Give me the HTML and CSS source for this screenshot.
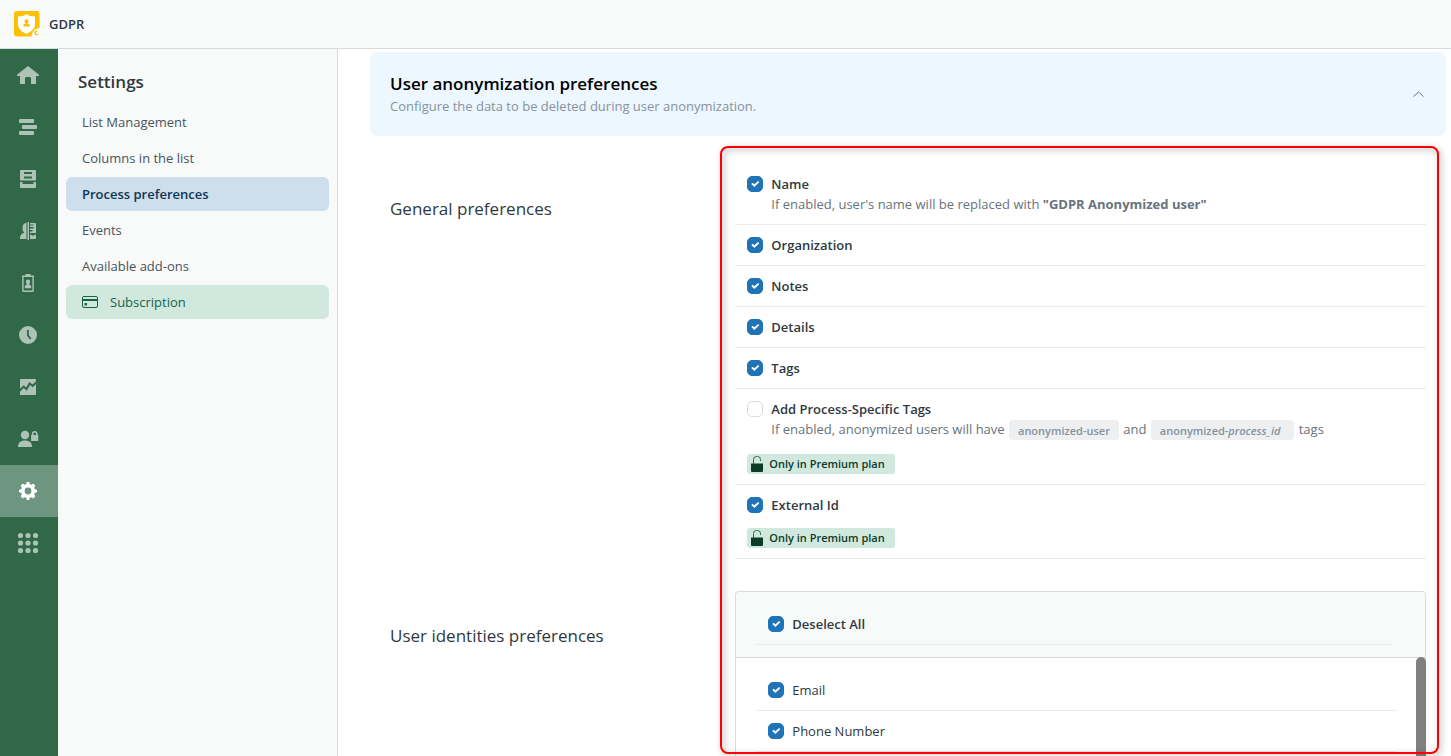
FILE: index.html
```html
<!DOCTYPE html>
<html lang="en">
<head>
<meta charset="utf-8">
<title>GDPR</title>
<link rel="stylesheet" href="styles.css">
</head>
<body>
<header class="topbar">
  <svg class="logo" viewBox="0 0 26 26" aria-hidden="true">
    <path fill="#fbc100" d="M3 0h20a2.500 2.500 0 0 1 2.500 2.500V17c-4 0-8 4-8 8.500H3A3 3 0 0 1 0 22.500v-19.500A3 3 0 0 1 3 0z"/>
    <path fill="#fff" d="M12.500 3c2.500 1.800 5 2.400 8.500 2.600v8c0 4-3.500 7-8.500 9.400C7.500 20.600 4 17.600 4 13.600v-8C7.500 5.400 10 4.800 12.500 3z"/>
    <circle cx="12.500" cy="10.300" r="2" fill="#fbc100"/>
    <path fill="#fbc100" d="M11.700 11h1.600v1.600l2.400.9v1.900H9.400v-1.900l2.300-.9z"/>
    <path fill="none" stroke="#fbc100" stroke-width="1.300" d="M23 20.500a1.600 1.600 0 1 0 .8 2.500"/>
  </svg>
  <span>GDPR</span>
</header>
<div class="shell">
  <nav class="rail" aria-label="Main">
    <a href="#" aria-label="Home"><svg viewBox="0 0 24 24"><path d="M12 3 1 11.700V13h3v7.200c0 .5.300.8.800.8H9v-5.500c0-.8.600-1.500 1.500-1.500h3c.9 0 1.500.7 1.500 1.500V21h4.200c.5 0 .8-.3.800-.8V13h3v-1.300z"/></svg></a>
    <a href="#" aria-label="Processes"><svg viewBox="0 0 24 24"><rect x="3" y="4" width="15" height="4" rx="1"/><rect x="6" y="10" width="15" height="4" rx="1"/><rect x="3" y="16" width="15" height="4" rx="1"/></svg></a>
    <a href="#" aria-label="Drafts"><svg viewBox="0 0 24 24"><path fill-rule="evenodd" d="M5 3h14a1 1 0 0 1 1 1v9.500H4V4a1 1 0 0 1 1-1zm3 2V7h8V5zm0 4.500v2h8v-2z"/><path d="M4 15h2.500v2h11v-2H20v5a1 1 0 0 1-1 1H5a1 1 0 0 1-1-1z"/></svg></a>
    <a href="#" aria-label="User data"><svg viewBox="0 0 24 24"><path d="M10.500 3.800v16.200H4c0-3.800 1.600-5.400 4.400-6.200C7 12.600 6.500 11 6.500 8.800c0-2.900 1.600-4.700 4-5z"/><path d="M11.500 3h1.500v18h-1.500z"/><path fill-rule="evenodd" d="M14 4h5a1 1 0 0 1 1 1v9h-6v-1.500h2.500V11H14V9.500h3.500V8H14V6.500h3.500V5.500H14zM14 15.500h1l1 1h2l1-1h1V19a1 1 0 0 1-1 1h-5z"/></svg></a>
    <a href="#" aria-label="Deletion"><svg viewBox="0 0 24 24"><path fill-rule="evenodd" d="M9.500 3h5v1.500H18V6h-.2v13.500a1.500 1.500 0 0 1-1.500 1.500H7.700a1.500 1.500 0 0 1-1.500-1.500V6H6V4.500h3.500zM7.600 6v13.600h8.800V6z"/><circle cx="12" cy="10.800" r="2.200"/><path d="M8.800 17.300v-1.900c0-.7.600-1.100 2-1.600V12h2.400v1.800c1.400.5 2 .9 2 1.600v1.900z"/></svg></a>
    <a href="#" aria-label="History"><svg viewBox="0 0 24 24"><path fill-rule="evenodd" d="M12 3a9 9 0 1 1 0 18 9 9 0 0 1 0-18zm-1 4v5.800l3 3.700 1.400-1.100-2.600-3.400V7z"/></svg></a>
    <a href="#" aria-label="Reports"><svg viewBox="0 0 24 24"><path d="M5 4h14a1 1 0 0 1 1 1v1.300l-3.500 3.200L13.300 7l-3.100 5.600-2.500-2.300L4 13.800V5a1 1 0 0 1 1-1zM4 16.700l3.700-3.700 3 2.700 3.300-5.800 2.700 2.400L20 9.200V19a1 1 0 0 1-1 1H4z"/></svg></a>
    <a href="#" aria-label="Agent access"><svg viewBox="0 0 24 24"><circle cx="9" cy="8" r="4.200"/><path d="M2 20c0-4.500 2.500-6.600 7-6.600s7 2.100 7 6.600z"/><path fill-rule="evenodd" d="M15.800 8V6.800a2.900 2.900 0 0 1 5.800 0V8h.7v6h-7.200V8zm1.600 0H20V6.800a1.300 1.300 0 0 0-2.600 0z"/></svg></a>
    <a href="#" class="current" aria-label="Settings" aria-current="page"><svg viewBox="0 0 24 24"><path fill-rule="evenodd" d="M10.700 3h2.600l.5 2.200 1.500.6 1.900-1.200 2.200 2.200-1.200 1.900.6 1.500 2.200.5v2.600l-2.200.5-.6 1.500 1.200 1.900-2.200 2.200-1.900-1.200-1.500.6-.5 2.200h-2.600l-.5-2.200-1.500-.6-1.900 1.200-2.200-2.200 1.200-1.900-.6-1.500L3 13.300v-2.600l2.200-.5.600-1.500-1.200-1.900 2.200-2.200 1.900 1.200 1.500-.6zM12 8.600a3.400 3.400 0 1 0 0 6.800 3.400 3.400 0 0 0 0-6.800z"/></svg></a>
    <a href="#" aria-label="Apps"><svg viewBox="0 0 24 24"><circle cx="4.500" cy="4.500" r="2.600"/><circle cx="12" cy="4.500" r="2.600"/><circle cx="19.500" cy="4.500" r="2.600"/><circle cx="4.500" cy="12" r="2.600"/><circle cx="12" cy="12" r="2.600"/><circle cx="19.500" cy="12" r="2.600"/><circle cx="4.500" cy="19.500" r="2.600"/><circle cx="12" cy="19.500" r="2.600"/><circle cx="19.500" cy="19.500" r="2.600"/></svg></a>
  </nav>
  <aside class="sidebar">
    <h1>Settings</h1>
    <nav class="menu" aria-label="Settings">
      <a href="#">List Management</a>
      <a href="#">Columns in the list</a>
      <a href="#" class="selected" aria-current="page">Process preferences</a>
      <a href="#">Events</a>
      <a href="#">Available add-ons</a>
      <a href="#" class="subscription"><svg viewBox="0 0 16 16" aria-hidden="true"><rect x=".5" y="2.500" width="15" height="11" rx="1.500" fill="none" stroke="currentColor"/><path fill="currentColor" d="M1 5h14v2H1zM2.500 9h2.500v2.500H2.500z"/></svg>Subscription</a>
    </nav>
  </aside>
  <main class="content">
    <section class="banner">
      <div>
        <h2>User anonymization preferences</h2>
        <p>Configure the data to be deleted during user anonymization.</p>
      </div>
      <button type="button" aria-label="Collapse" aria-expanded="true"><svg viewBox="0 0 12 12" aria-hidden="true"><path d="M1.500 8.500 6.500 4l5 4.500" fill="none" stroke="#68737d"/></svg></button>
    </section>
    <div class="preferences">
      <section class="group">
        <h3>General preferences</h3>
        <ul class="options">
          <li>
            <label><input type="checkbox" checked>Name</label>
            <p class="hint">If enabled, user's name will be replaced with <b>"GDPR Anonymized user"</b></p>
          </li>
          <li><label><input type="checkbox" checked>Organization</label></li>
          <li><label><input type="checkbox" checked>Notes</label></li>
          <li><label><input type="checkbox" checked>Details</label></li>
          <li><label><input type="checkbox" checked>Tags</label></li>
          <li>
            <label><input type="checkbox">Add Process-Specific Tags</label>
            <p class="hint tagged">If enabled, anonymized users will have <span class="chip">anonymized-user</span> and <span class="chip wide">anonymized-<i>process_id</i></span> tags</p>
            <span class="plan"><svg viewBox="0 0 12 16" aria-hidden="true"><path d="M0 7.500h12V15a1 1 0 0 1-1 1H1a1 1 0 0 1-1-1z" fill="#0b3b29"/><path d="M2.500 8V3.500a3 3 0 0 1 3-3h1a3 3 0 0 1 3 3V5" fill="none" stroke="#2c6650"/></svg>Only in Premium plan</span>
          </li>
          <li>
            <label><input type="checkbox" checked>External Id</label>
            <span class="plan"><svg viewBox="0 0 12 16" aria-hidden="true"><path d="M0 7.500h12V15a1 1 0 0 1-1 1H1a1 1 0 0 1-1-1z" fill="#0b3b29"/><path d="M2.500 8V3.500a3 3 0 0 1 3-3h1a3 3 0 0 1 3 3V5" fill="none" stroke="#2c6650"/></svg>Only in Premium plan</span>
          </li>
        </ul>
      </section>
      <section class="group fill">
        <h3>User identities preferences</h3>
        <div class="identities">
          <ul class="options all">
            <li><label><input type="checkbox" checked>Deselect All</label></li>
          </ul>
          <div class="scroller">
            <ul class="options plain">
              <li><label><input type="checkbox" checked>Email</label></li>
              <li><label><input type="checkbox" checked>Phone Number</label></li>
            </ul>
            <div class="thumb"></div>
          </div>
        </div>
      </section>
      <div class="highlight"></div>
    </div>
  </main>
</div>
</body>
</html>
```
FILE: styles.css
```css
* { box-sizing: border-box; }

body {
  display: flex;
  flex-direction: column;
  height: 100vh;
  margin: 0;
  overflow: hidden;
  background: #fff;
  color: #2f3941;
  font: 13px/20px "Open Sans", "Segoe UI", sans-serif;
}

h1, h2, h3, p, ul { margin: 0; padding: 0; }
ul { list-style: none; }
a { color: inherit; text-decoration: none; }

.topbar {
  display: flex;
  flex: none;
  align-items: center;
  gap: 9px;
  height: 49px;
  padding-left: 14px;
  border-bottom: 1px solid #d8dcde;
  background: #f8f9f9;
  font-weight: 600;
}
.logo { width: 26px; height: 26px; }

.shell {
  display: grid;
  flex: 1;
  grid-template-columns: 58px 280px minmax(0, 1fr);
  min-height: 0;
}

.rail { background: #306848; }
.rail a {
  display: flex;
  align-items: center;
  height: 52px;
  padding-left: 16px;
}
.rail svg { width: 24px; height: 24px; fill: #acc3b6; }
.rail .current { background: #6e957f; }
.rail .current svg { fill: #fff; }

.sidebar {
  padding: 20px 8px;
  border-right: 1px solid #d8dcde;
  background: #f8f9f9;
}
.sidebar h1 {
  padding-left: 12px;
  font-size: 17px;
  font-weight: 600;
  line-height: 26px;
}
.menu {
  display: grid;
  gap: 2px;
  margin-top: 10px;
  color: #49545c;
}
.menu a {
  display: flex;
  align-items: center;
  height: 34px;
  padding: 0 16px;
  border-radius: 6px;
}
.menu .selected { background: #cddeec; color: #0f3554; font-weight: 600; }
.menu .subscription { gap: 12px; background: #d1e8df; color: #186146; }
.menu svg { width: 16px; height: 16px; }

.content {
  display: flex;
  flex-direction: column;
  min-height: 0;
  padding: 3px 5px 0 32px;
}

.banner {
  display: flex;
  flex: none;
  align-items: center;
  justify-content: space-between;
  height: 84px;
  padding: 0 20px;
  border-radius: 8px;
  background: #edf7ff;
}
.banner h2 {
  color: #000;
  font-size: 17px;
  font-weight: 600;
  line-height: 24px;
}
.banner p { color: #87929d; }
.banner button {
  display: flex;
  padding: 2px;
  border: 0;
  background: none;
}
.banner svg { width: 12px; height: 12px; }

.preferences {
  position: relative;
  display: flex;
  flex: 1;
  flex-direction: column;
  gap: 32px;
  min-height: 0;
  padding: 28px 20px 0;
}

.group {
  display: grid;
  grid-template-columns: minmax(0, 1fr) minmax(0, 2fr);
}
.fill { flex: 1; min-height: 0; }
.group h3 {
  padding-top: 32px;
  font-size: 17px;
  font-weight: 400;
  line-height: 26px;
}

.options li {
  padding: 10px 12px;
  border-bottom: 1px solid #e9ebed;
}
.options label {
  display: flex;
  align-items: center;
  gap: 8px;
  font-weight: 600;
}
.options.plain label { font-weight: 400; }

input[type="checkbox"] {
  display: grid;
  place-items: center;
  width: 16px;
  height: 16px;
  margin: 0;
  border: 1px solid #d8dcde;
  border-radius: 5px;
  appearance: none;
  background: #fff;
}
input[type="checkbox"]:checked { border-color: #1f73b7; background: #1f73b7; }
input[type="checkbox"]:checked::before {
  width: 8px;
  height: 6px;
  background: #fff;
  clip-path: polygon(0 50%, 16% 28%, 38% 56%, 84% 0, 100% 20%, 38% 100%);
  content: "";
}

.hint { padding-left: 24px; color: #68737d; }
.hint b { font-weight: 700; }
.tagged { height: 22px; }
.chip {
  display: inline-block;
  height: 20px;
  margin: 1px 1px 0;
  padding: 0 9px;
  border-radius: 4px;
  background: #edeff0;
  color: #87929d;
  font-size: 11px;
  font-weight: 600;
  line-height: 22px;
  vertical-align: top;
}
.wide { padding-right: 14px; }

.plan {
  display: flex;
  align-items: center;
  gap: 6px;
  width: max-content;
  height: 20px;
  margin-top: 13px;
  padding: 0 10px 0 4px;
  border-radius: 3px;
  background: #d1e8df;
  color: #0b3b29;
  font-size: 11px;
  font-weight: 600;
}
.plan svg { width: 12px; height: 16px; }

.identities {
  display: flex;
  flex-direction: column;
  min-height: 0;
  border: 1px solid #d8dcde;
  border-bottom: 0;
  border-radius: 4px 4px 0 0;
}
.all {
  padding: 12px 33px 12px 20px;
  border-radius: 4px 4px 0 0;
  background: #f8f9f9;
}
.scroller {
  display: flex;
  flex: 1;
  min-height: 0;
  border-top: 1px solid #d8dcde;
}
.scroller .options { flex: 1; padding: 12px 19px 0 20px; }
.thumb {
  width: 10px;
  margin: -1px -1px 0 0;
  border-radius: 5px 5px 0 0;
  background: #808080;
}

.highlight {
  position: absolute;
  top: 10px;
  right: 7px;
  bottom: 2px;
  left: calc((100% - 40px) / 3 + 5px);
  border: 2px solid #f00;
  border-radius: 8px;
  filter: drop-shadow(2px 2px 3px rgb(0 0 0 / 40%));
  pointer-events: none;
}
```
